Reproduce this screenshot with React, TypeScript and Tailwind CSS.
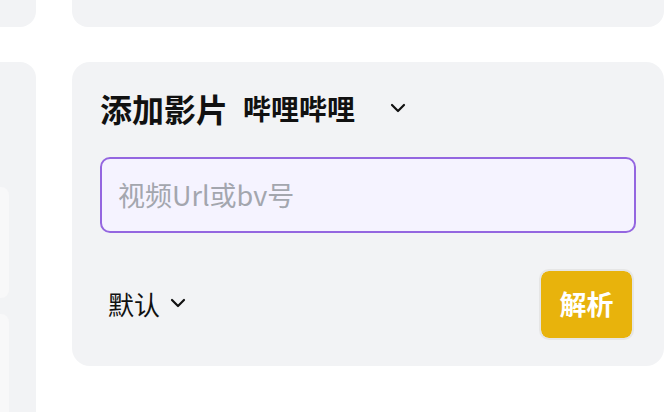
import React from "react";

function Chevron({ className }: { className?: string }) {
  return (
    <svg viewBox="0 0 24 24" fill="none" stroke="currentColor" strokeWidth={2.2} strokeLinecap="round" strokeLinejoin="round" className={className}>
      <path d="M6 9l6 6 6-6" />
    </svg>
  );
}

export default function App() {
  return (
    <div
      className="w-[664px] h-[412px] overflow-hidden bg-white flex gap-[36px]"
      style={{ fontFamily: '"Noto Sans CJK SC", "Noto Sans", sans-serif' }}
    >
      {/* left column */}
      <div className="w-[36px] shrink-0 flex flex-col gap-[35px]">
        <div className="h-[27px] shrink-0 bg-[#f2f3f5] rounded-br-[16px]" />
        <div className="h-[360px] shrink-0 bg-[#f2f3f5] rounded-tr-[16px] pt-[125px] flex flex-col gap-[16px]">
          <div className="w-[9px] h-[111px] shrink-0 bg-[#f8f8f9] rounded-r-[8px]" />
          <div className="w-[9px] h-[111px] shrink-0 bg-[#f8f8f9] rounded-r-[8px]" />
        </div>
      </div>

      {/* right column */}
      <div className="flex-1 flex flex-col gap-[35px]">
        <div className="h-[27px] shrink-0 bg-[#f2f3f5] rounded-b-[16px]" />
        <div className="shrink-0 bg-[#f2f3f5] rounded-[18px] px-[28px] pt-[26px] pb-[26px] flex flex-col">
          <div className="flex items-center h-[40px]">
            <span className="text-[32px] leading-[40px] font-bold text-[#111]">添加影片</span>
            <span className="ml-[15px] text-[28px] leading-[40px] font-bold text-[#111]">哔哩哔哩</span>
            <Chevron className="ml-[31px] w-[24px] h-[24px] text-[#111]" />
          </div>
          <div className="mt-[29px] h-[76px] rounded-[10px] border-[2.5px] border-[#9466e0] bg-[#f5f3ff] flex items-center pl-[16px]">
            <span className="text-[27px] text-[#a3a6ae]">视频Url或bv号</span>
          </div>
          <div className="mt-[36px] flex items-center justify-between">
            <div className="flex items-center pl-[8px] gap-[6px] mb-[3px]">
              <span className="text-[26px] text-[#111]">默认</span>
              <Chevron className="w-[24px] h-[24px] text-[#111]" />
            </div>
            <button className="mr-[2px] w-[95px] h-[71px] rounded-[10px] border-[2px] border-[#e6e6e6] bg-[#e8b30c] bg-clip-padding flex items-center justify-center">
              <span className="text-[27px] font-bold text-white">解析</span>
            </button>
          </div>
        </div>
      </div>
    </div>
  );
}
